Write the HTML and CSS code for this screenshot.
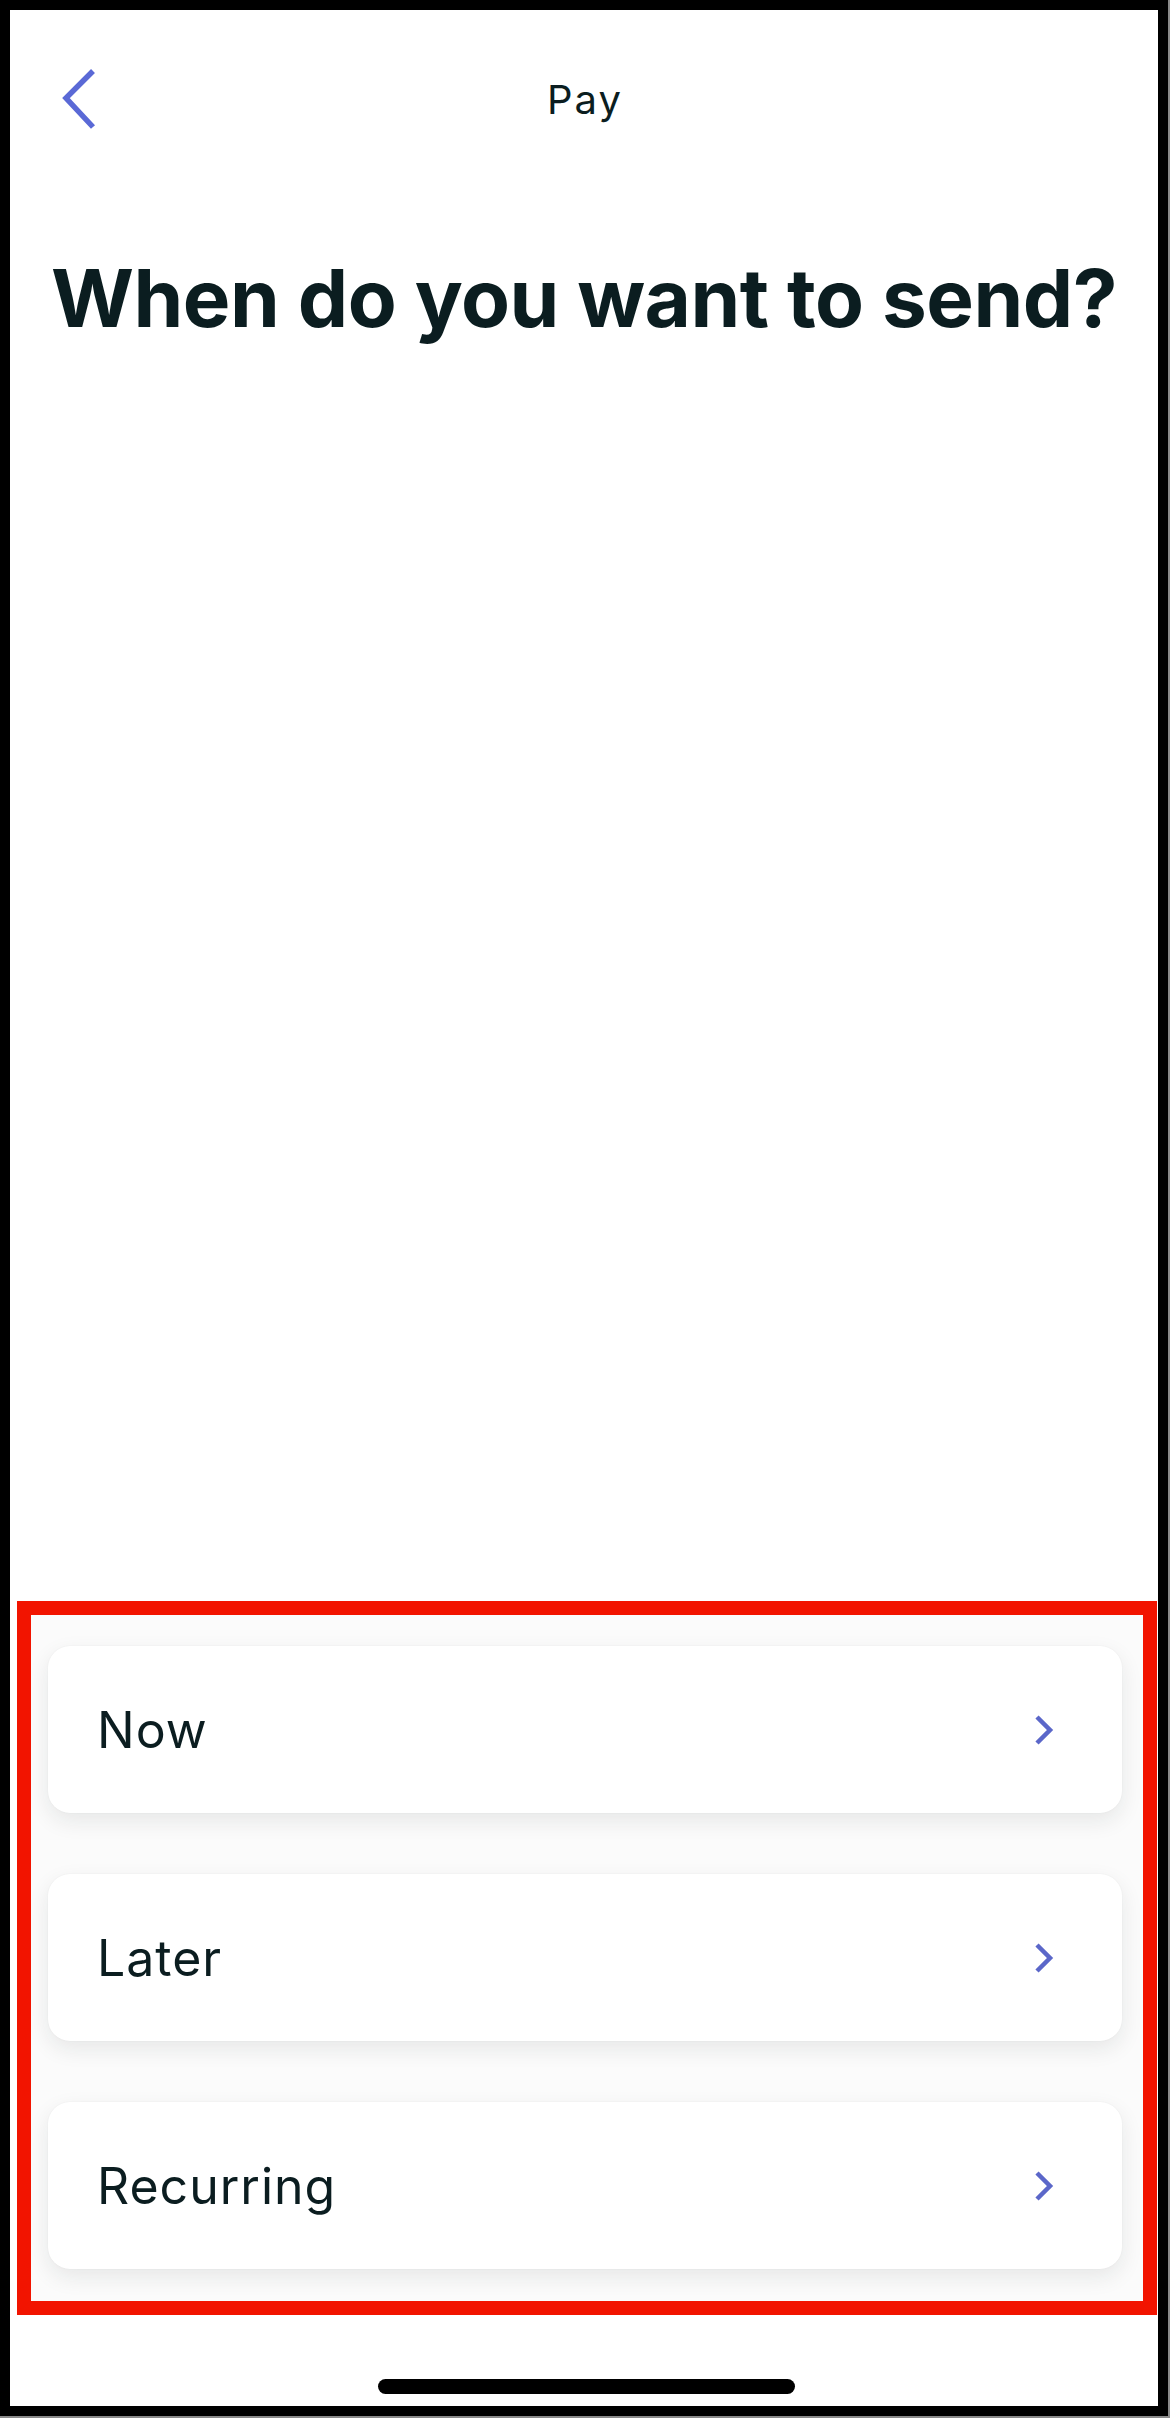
FILE: index.html
```html
<!DOCTYPE html>
<html lang="en">
<head>
  <meta charset="UTF-8">
  <meta name="viewport" content="width=device-width, initial-scale=1.0">
  <title>Pay</title>
  <link rel="stylesheet" href="styles.css">
</head>
<body>
  <div class="frame">
    <header class="nav">
      <button class="back" aria-label="Back">
        <svg width="40" height="64" viewBox="0 0 40 64">
          <path d="M35 4 L8 31 L35 60" fill="none" stroke="#5a69d6" stroke-width="5.5"/>
        </svg>
      </button>
      <span class="nav-title">Pay</span>
    </header>

    <h1 class="title">When do you want to send?</h1>

    <div class="spacer"></div>

    <section class="options">
      <a class="option" href="#">
        <span>Now</span>
        <svg class="chev" width="24" height="32" viewBox="0 0 24 32">
          <path d="M4 3 L17 16 L4 29" fill="none" stroke="#5b67c9" stroke-width="4.5"/>
        </svg>
      </a>
      <a class="option" href="#">
        <span>Later</span>
        <svg class="chev" width="24" height="32" viewBox="0 0 24 32">
          <path d="M4 3 L17 16 L4 29" fill="none" stroke="#5b67c9" stroke-width="4.5"/>
        </svg>
      </a>
      <a class="option" href="#">
        <span>Recurring</span>
        <svg class="chev" width="24" height="32" viewBox="0 0 24 32">
          <path d="M4 3 L17 16 L4 29" fill="none" stroke="#5b67c9" stroke-width="4.5"/>
        </svg>
      </a>
    </section>

    <footer class="home">
      <div class="home-bar"></div>
    </footer>
  </div>
</body>
</html>
```

FILE: styles.css
```css
html, body {
  margin: 0;
  padding: 0;
}
body {
  width: 1170px;
  height: 2418px;
  background: #8a8a8a;
  font-family: Inter, "Liberation Sans", sans-serif;
  color: #0b1d20;
}

.frame {
  box-sizing: border-box;
  width: 1168px;
  height: 2416px;
  border: 10px solid #000;
  background: #fff;
  display: flex;
  flex-direction: column;
}

.nav {
  position: relative;
  height: 178px;
  display: flex;
  align-items: center;
  justify-content: center;
}
.back {
  position: absolute;
  left: 48px;
  top: 57px;
  padding: 0;
  border: 0;
  background: none;
  cursor: pointer;
}
.back svg {
  display: block;
}
.nav-title {
  font-size: 40px;
  letter-spacing: 2px;
  margin-left: 2px;
}

.title {
  margin: 62px 0 0 41px;
  font-size: 80px;
  font-weight: 700;
  line-height: 96px;
  letter-spacing: -0.5px;
}

.spacer {
  flex: 1;
}

.options {
  margin: 0 1px 0 7px;
  border: 14px solid #f21400;
  padding: 31px 21px 32px 17px;
  display: flex;
  flex-direction: column;
  gap: 61px;
  background: #fbfbfb;
}
.option {
  height: 167px;
  box-sizing: border-box;
  display: flex;
  align-items: center;
  justify-content: space-between;
  padding: 0 65px 0 49px;
  background: #fff;
  border-radius: 22px;
  box-shadow: 0 8px 22px rgba(20, 30, 35, 0.09), 0 0 2px rgba(20, 30, 35, 0.05);
  text-decoration: none;
  color: #0b1d20;
  font-size: 50px;
  letter-spacing: 1px;
}
.chev {
  display: block;
}

.home {
  height: 91px;
  display: flex;
  justify-content: center;
}
.home-bar {
  margin-top: 64px;
  margin-left: 4px;
  width: 417px;
  height: 15px;
  border-radius: 8px;
  background: #000;
}
```
